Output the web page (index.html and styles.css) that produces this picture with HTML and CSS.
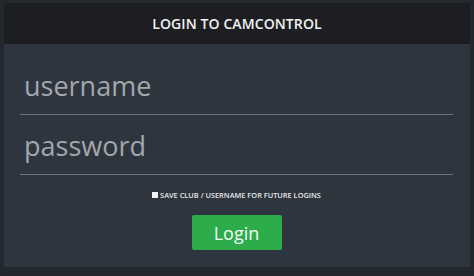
FILE: index.html
```html
<!DOCTYPE html>
<html>
<head>
<meta charset="utf-8">
<link rel="stylesheet" href="styles.css">
</head>
<body>
<div class="panel">
  <div class="header">LOGIN TO CAMCONTROL</div>
  <form class="body">
    <div class="field"><input class="input" type="text" placeholder="username"></div>
    <div class="field"><input class="input" type="password" placeholder="password"></div>
    <label class="save"><span class="box"></span>SAVE CLUB / USERNAME FOR FUTURE LOGINS</label>
    <div class="actions"><button class="btn" type="button">Login</button></div>
  </form>
</div>
</body>
</html>
```
FILE: styles.css
```css
html, body { margin: 0; padding: 0; }
body {
  background: #23282f;
  width: 474px;
  height: 276px;
  padding: 3px 4px;
  box-sizing: border-box;
  font-family: "Open Sans", "DejaVu Sans", sans-serif;
}
.panel {
  width: 466px;
  height: 264px;
  background: #2f353e;
  display: flex;
  flex-direction: column;
}
.header {
  height: 41px;
  background: #1c1e22;
  color: #f2f2f2;
  font-size: 14px;
  font-weight: 600;
  display: flex;
  align-items: center;
  justify-content: center;
  letter-spacing: 0.1px;
}
.body {
  margin: 0;
  padding: 18px 17px 0 16px;
  display: flex;
  flex-direction: column;
}
.field {
  border-bottom: 1px solid #6c727b;
  height: 52px;
  margin-bottom: 7px;
  display: flex;
  align-items: center;
}
.input {
  background: transparent;
  border: 0;
  outline: none;
  color: #a9adb3;
  font-family: "Open Sans", sans-serif;
  font-size: 27px;
  padding: 0 0 0 4px;
  width: 100%;
  margin-top: -6px;
}
.input::placeholder { color: #a3a7ad; opacity: 1; }
.save {
  display: flex;
  align-items: center;
  justify-content: center;
  color: #e6e8ea;
  font-size: 7.4px;
  font-weight: 600;
  margin-top: 8px;
}
.box {
  width: 6px;
  height: 6px;
  background: #f4f4f4;
  margin-right: 2px;
}
.actions {
  display: flex;
  justify-content: center;
  margin-top: 15px;
}
.btn {
  width: 90px;
  height: 35px;
  background: #2dac4b;
  border: 0;
  border-radius: 2px;
  color: #f4fbf5;
  font-family: "Open Sans", sans-serif;
  font-size: 18px;
  padding: 0;
}
```
